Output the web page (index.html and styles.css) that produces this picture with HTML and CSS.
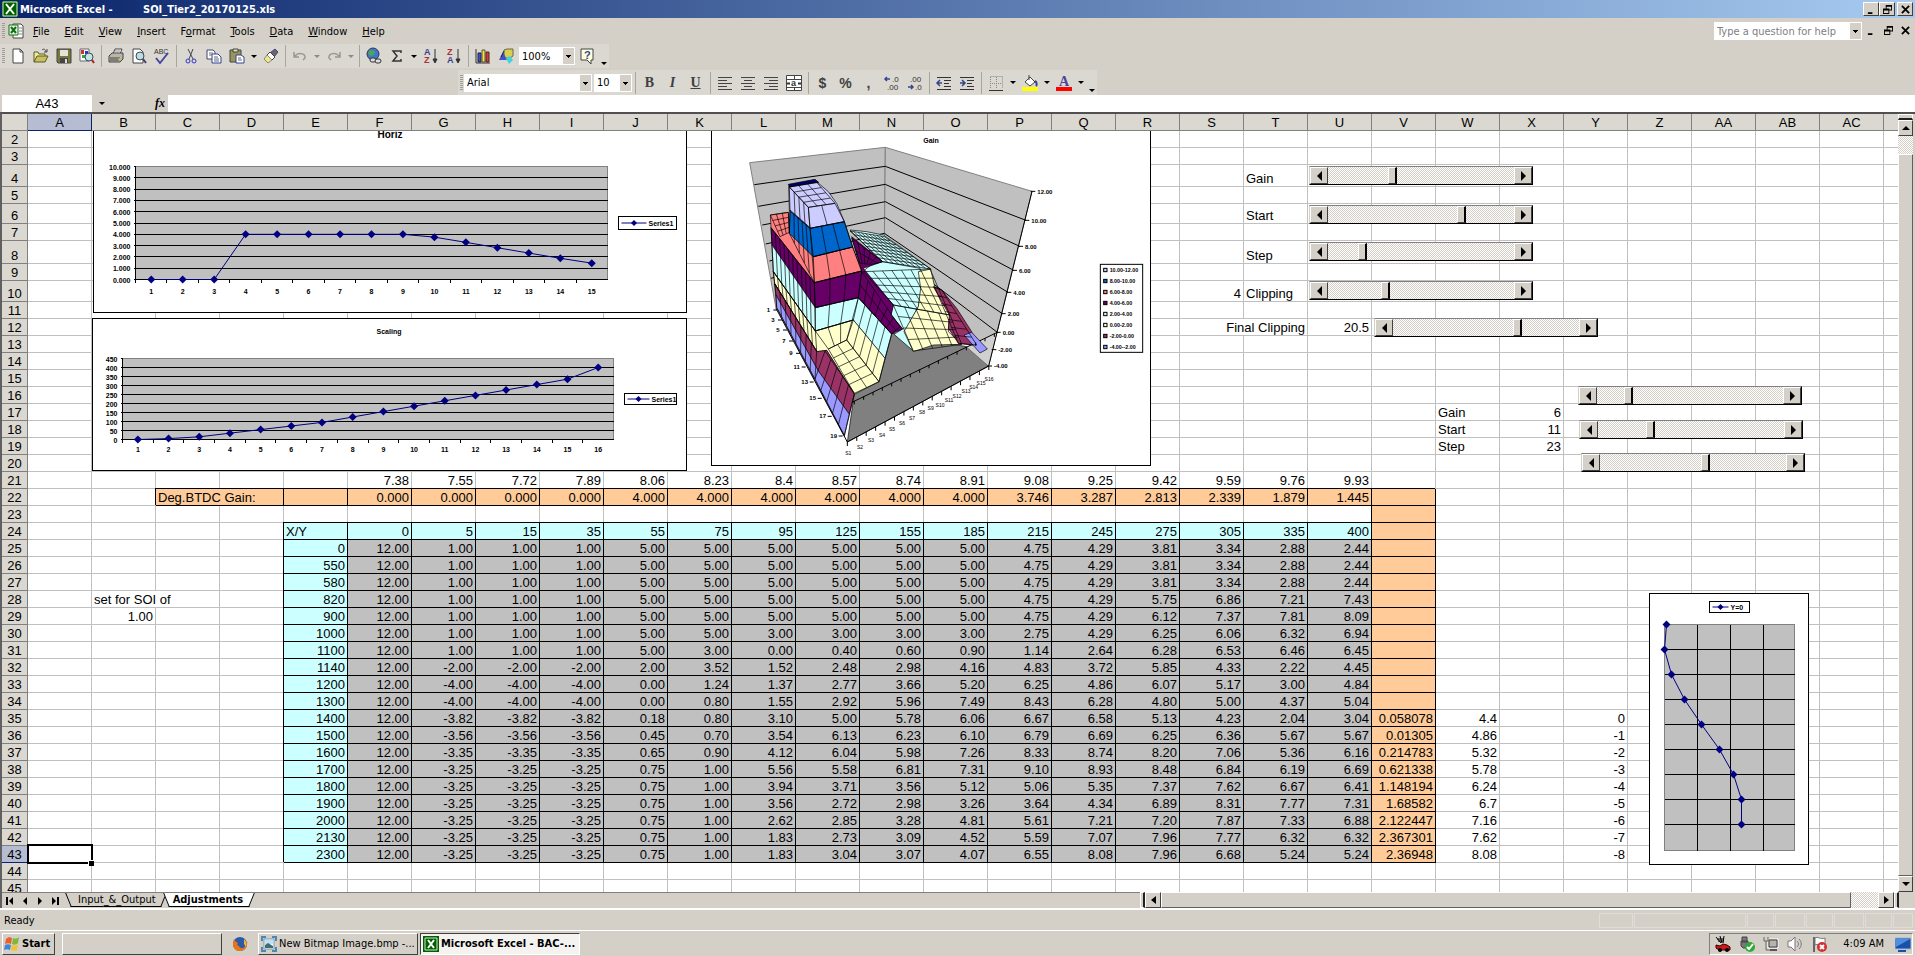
FILE: index.html
```html
<!DOCTYPE html>
<html lang="en">

<head>
    <meta charset="UTF-8">
    <meta name="viewport" content="width=device-width, initial-scale=1.0">
    <title>Microsoft Excel - SOI_Tier2_20170125.xls</title>
    <link rel="stylesheet" href="styles.css">
</head>

<body>

    <header class="titlebar">
        <svg class="icon" viewBox="0 0 16 16"><rect width="16" height="16" fill="#006000"/><path d="M1 1h14v14H1z" fill="none" stroke="#cfe8cf"/><path d="M4 3l8 10M12 3L4 13" stroke="#fff" stroke-width="2"/></svg>
        <span class="app">Microsoft Excel -</span>
        <span class="doc">SOI_Tier2_20170125.xls</span>
        <div class="win-buttons">
            <button aria-label="Minimize"><svg viewBox="0 0 10 10"><path d="M1 8h5v2H1z"/></svg></button>
            <button aria-label="Restore"><svg viewBox="0 0 10 10"><path d="M3 0h7v6H7v4H0V4h3zM4 2v2h3v1h2V2zM1 6v3h5V6z" fill-rule="evenodd"/></svg></button>
            <button aria-label="Close" class="close"><svg viewBox="0 0 10 10"><path d="M1 1l8 8M9 1L1 9" stroke="#000" stroke-width="2"/></svg></button>
        </div>
    </header>

    <nav class="menubar">
        <span class="grip"></span>
        <svg class="icon" viewBox="0 0 16 16"><path d="M5 1h8l2 2v12H5z" fill="#fff" stroke="#444"/><path d="M1 2h9v10H1z" fill="#e8f5e8" stroke="#107010"/><path d="M3 4l5 6M8 4l-5 6" stroke="#107010" stroke-width="2"/><path d="M11 5h3M11 8h3M11 11h3" stroke="#888"/></svg>
        <button><u>F</u>ile</button>
        <button><u>E</u>dit</button>
        <button><u>V</u>iew</button>
        <button><u>I</u>nsert</button>
        <button>F<u>o</u>rmat</button>
        <button><u>T</u>ools</button>
        <button><u>D</u>ata</button>
        <button><u>W</u>indow</button>
        <button><u>H</u>elp</button>
        <div class="ask combo">
            <input type="text" placeholder="Type a question for help" aria-label="Type a question for help">
        </div>
        <div class="doc-buttons">
            <button aria-label="Minimize window"><svg viewBox="0 0 10 10"><path d="M1 8h5v2H1z"/></svg></button>
            <button aria-label="Restore window"><svg viewBox="0 0 10 10"><path d="M3 0h7v6H7v4H0V4h3zM4 2v2h3v1h2V2zM1 6v3h5V6z" fill-rule="evenodd"/></svg></button>
            <button aria-label="Close window"><svg viewBox="0 0 10 10"><path d="M1 1l8 8M9 1L1 9" stroke="#000" stroke-width="2"/></svg></button>
        </div>
    </nav>

    <div class="toolbar standard">
        <span class="grip"></span>
        <button aria-label="New"><svg viewBox="0 0 16 16"><path d="M3 1h7l3 3v11H3z" fill="#fff" stroke="#444"/><path d="M10 1v3h3" fill="none" stroke="#444"/></svg></button>
        <button aria-label="Open"><svg viewBox="0 0 16 16"><path d="M1 14V4h4l1 2h6v2" fill="#f5e9a0" stroke="#5a5a20"/><path d="M1 14l3-6h11l-3 6z" fill="#c9c060" stroke="#5a5a20"/><path d="M9 2c2-2 4 0 4 2M11 4h3V1" fill="none" stroke="#444"/></svg></button>
        <button aria-label="Save"><svg viewBox="0 0 16 16"><path d="M1 1h14v14H2l-1-1z" fill="#77773c" stroke="#444"/><path d="M4 2h8v6H4z" fill="#e4e2da"/><path d="M4 10h8v5H4z" fill="#444"/><path d="M9 11h2v4H9z" fill="#ddd"/></svg></button>
        <button aria-label="Search"><svg viewBox="0 0 16 16"><path d="M1 1h9v12H1z" fill="#fff" stroke="#667"/><path d="M2 2h3v4H2z" fill="#c33"/><path d="M6 3h3v3H6z" fill="#33c"/><path d="M3 7h3v3H3z" fill="#3a3"/><circle cx="10" cy="9" r="4" fill="#bfe6e6" stroke="#445"/><path d="M13 12l2 3" stroke="#a22" stroke-width="2"/></svg></button>
        <span class="sep"></span>
        <button aria-label="Print"><svg viewBox="0 0 16 16"><path d="M5 6l2-5h7l-2 5" fill="#fff" stroke="#444"/><path d="M1 8l3-3h11v6l-3 3H1z" fill="#b8b6a8" stroke="#444"/><path d="M2 10h10M2 12h9" stroke="#444"/><path d="M7 3h5M6 5h5" stroke="#888"/><path d="M10 11h2" stroke="#dd0"/></svg></button>
        <button aria-label="Print Preview"><svg viewBox="0 0 16 16"><path d="M2 1h7l3 3v11H2z" fill="#fff" stroke="#444"/><circle cx="9" cy="8" r="4" fill="#b9e0e0" stroke="#445"/><path d="M12 11l3 4" stroke="#446" stroke-width="2"/></svg></button>
        <button aria-label="Spelling"><svg viewBox="0 0 16 16"><text x="0" y="6" font-size="7" fill="#333">ABC</text><path d="M2 10l4 5 8-10" fill="none" stroke="#4646a0" stroke-width="2"/></svg></button>
        <span class="sep"></span>
        <button aria-label="Cut"><svg viewBox="0 0 16 16"><path d="M5 1l5 10M10 1L6 11" stroke="#445" fill="none"/><circle cx="5" cy="13" r="2" fill="none" stroke="#33c"/><circle cx="11" cy="13" r="2" fill="none" stroke="#33c"/></svg></button>
        <button aria-label="Copy"><svg viewBox="0 0 16 16"><path d="M1 2h6l2 2v7H1z" fill="#fff" stroke="#446"/><path d="M6 6h6l3 3v6H6z" fill="#fff" stroke="#33458c"/><path d="M3 5h4M3 7h3M8 9h4M8 11h5M8 13h5" stroke="#668"/></svg></button>
        <button aria-label="Paste"><svg viewBox="0 0 16 16"><path d="M1 2h11v12H1z" fill="#98945a" stroke="#444"/><path d="M4 1h5v3H4z" fill="#ddb" stroke="#444"/><path d="M7 7h5l3 2v6H7z" fill="#fff" stroke="#33458c"/><path d="M9 10h3M9 12h4" stroke="#668"/></svg></button>
        <button class="drop" aria-label="Paste options"></button>
        <button aria-label="Format Painter"><svg viewBox="0 0 16 16"><path d="M12 1l3 3-4 5-4-4z" fill="#667" stroke="#446"/><path d="M7 4l5 5-3 3-5-5z" fill="#fff" stroke="#444"/><path d="M4 7l5 5-4 3-4-4z" fill="#f0e68c" stroke="#887"/></svg></button>
        <span class="sep"></span>
        <button aria-label="Undo"><svg viewBox="0 0 16 16"><path d="M2 4v5h5M3 8c3-4 11-3 10 2l-2 2" fill="none" stroke="#9a978f" stroke-width="1.5"/></svg></button>
        <button class="drop off" aria-label="Undo list"></button>
        <button aria-label="Redo"><svg viewBox="0 0 16 16"><path d="M14 4v5H9M13 8C10 4 2 5 3 10l2 2" fill="none" stroke="#9a978f" stroke-width="1.5"/></svg></button>
        <button class="drop off" aria-label="Redo list"></button>
        <span class="sep"></span>
        <button aria-label="Insert Hyperlink"><svg viewBox="0 0 16 16"><circle cx="7" cy="6" r="6" fill="#3c78c8" stroke="#335"/><path d="M4 2l5 1-1 4-4 1-2-3z" fill="#4fa35a"/><rect x="4" y="10" width="6" height="4" rx="2" fill="#ddd" stroke="#333"/><rect x="9" y="11" width="6" height="4" rx="2" fill="#ddd" stroke="#333"/></svg></button>
        <button aria-label="AutoSum"><svg viewBox="0 0 16 16"><path d="M12 5V3H4l4 5-4 5h8v-2" fill="none" stroke="#333" stroke-width="1.5"/></svg></button>
        <button class="drop" aria-label="AutoSum options"></button>
        <button aria-label="Sort Ascending"><svg viewBox="0 0 16 16"><text x="1" y="7" font-size="9" font-weight="bold" fill="#33458c">A</text><text x="1" y="15" font-size="9" font-weight="bold" fill="#a33">Z</text><path d="M12 1v13M10 11l2 4 2-4z" stroke="#333" fill="#333"/></svg></button>
        <button aria-label="Sort Descending"><svg viewBox="0 0 16 16"><text x="1" y="7" font-size="9" font-weight="bold" fill="#a33">Z</text><text x="1" y="15" font-size="9" font-weight="bold" fill="#33458c">A</text><path d="M12 1v13M10 11l2 4 2-4z" stroke="#333" fill="#333"/></svg></button>
        <span class="sep"></span>
        <button aria-label="Chart Wizard"><svg viewBox="0 0 16 16"><path d="M1 1v14h14" fill="none" stroke="#333"/><path d="M3 5h3v9H3z" fill="#3c50c8" stroke="#223"/><path d="M7 2h3v12H7z" fill="#f5e050" stroke="#553"/><path d="M11 4h3v10h-3z" fill="#d23c3c" stroke="#522"/></svg></button>
        <button aria-label="Drawing"><svg viewBox="0 0 16 16"><path d="M6 2l3-1h6v7l-3 2H6z" fill="#d8cf4a" stroke="#665"/><path d="M1 12L5 4l4 8z" fill="#3f52c8"/><path d="M3 9l3-6" stroke="#223"/><path d="M8 10l4-2 3 4-4 4z" fill="#3fd2e0"/></svg></button>
        <div class="combo zoom">
            <select aria-label="Zoom"><option>100%</option></select>
        </div>
        <button aria-label="Help"><svg viewBox="0 0 16 16"><path d="M2 1h12v11h-2v4l-4-4H2z" fill="#ffffe0" stroke="#444"/><text x="5" y="11" font-size="11" font-weight="bold" fill="#33458c">?</text></svg></button>
        <button class="drop more" aria-label="Toolbar options"></button>
    </div>

    <div class="toolbar formatting">
        <span class="grip"></span>
        <div class="combo font">
            <select aria-label="Font"><option>Arial</option></select>
        </div>
        <div class="combo size">
            <select aria-label="Font Size"><option>10</option></select>
        </div>
        <span class="sep"></span>
        <button class="letter"><b>B</b></button>
        <button class="letter"><b><i>I</i></b></button>
        <button class="letter"><b><u>U</u></b></button>
        <span class="sep"></span>
        <button aria-label="Align Left"><svg viewBox="0 0 16 16"><path d="M1 2.5h14M1 5.5h9M1 8.5h14M1 11.5h9M1 14.5h14" stroke="#444"/></svg></button>
        <button aria-label="Center"><svg viewBox="0 0 16 16"><path d="M1 2.5h14M4 5.5h8M1 8.5h14M4 11.5h8M1 14.5h14" stroke="#444"/></svg></button>
        <button aria-label="Align Right"><svg viewBox="0 0 16 16"><path d="M1 2.5h14M6 5.5h9M1 8.5h14M6 11.5h9M1 14.5h14" stroke="#444"/></svg></button>
        <button aria-label="Merge and Center"><svg viewBox="0 0 16 16"><path d="M.5 .5h15v15H.5zM1 4.5h14M1 12.5h14M8.5 1v3M8.5 13v2" fill="#fff" stroke="#444"/><text x="5" y="11" font-size="9" font-weight="bold" fill="#333">a</text><path d="M1 8.5h3M12 8.5h3" stroke="#333" stroke-width="2"/></svg></button>
        <span class="sep"></span>
        <button class="letter sign">$</button>
        <button class="letter sign">%</button>
        <button class="letter sign">,</button>
        <button aria-label="Increase Decimal"><svg viewBox="0 0 16 16"><path d="M1 4h5M3 2L1 4l2 2" fill="none" stroke="#33458c" stroke-width="1.5"/><text x="8" y="7" font-size="8" fill="#333">.0</text><text x="3" y="15" font-size="8" fill="#333">.00</text></svg></button>
        <button aria-label="Decrease Decimal"><svg viewBox="0 0 16 16"><text x="3" y="7" font-size="8" fill="#333">.00</text><path d="M1 12h5M4 10l2 2-2 2" fill="none" stroke="#33458c" stroke-width="1.5"/><text x="8" y="15" font-size="8" fill="#333">.0</text></svg></button>
        <span class="sep"></span>
        <button aria-label="Decrease Indent"><svg viewBox="0 0 16 16"><path d="M1 2.5h14M8 5.5h7M8 8.5h5M8 11.5h7M1 14.5h14" stroke="#333"/><path d="M1 8h5M4 5L1 8l3 3" fill="none" stroke="#33458c" stroke-width="1.5"/></svg></button>
        <button aria-label="Increase Indent"><svg viewBox="0 0 16 16"><path d="M1 2.5h14M8 5.5h7M8 8.5h5M8 11.5h7M1 14.5h14" stroke="#333"/><path d="M1 8h5M3 5l3 3-3 3" fill="none" stroke="#33458c" stroke-width="1.5"/></svg></button>
        <span class="sep"></span>
        <button aria-label="Borders"><svg viewBox="0 0 16 16"><path d="M2.5 1.5h12v12M2.5 2v12M8.5 2v12M2 8.5h12" fill="none" stroke="#888" stroke-dasharray="1 1"/><path d="M1 15.5h14" stroke="#333"/></svg></button>
        <button class="drop" aria-label="Border options"></button>
        <button aria-label="Fill Color"><svg viewBox="0 0 16 16"><path d="M3 7l5-5 5 5-5 4z" fill="#fff" stroke="#444"/><path d="M13 6c2 1 2 4 1 5" stroke="#33458c" stroke-width="2" fill="none"/><path d="M7 0v5" stroke="#444"/><path d="M0 12h16v4H0z" fill="#ff0"/></svg></button>
        <button class="drop" aria-label="Fill colours"></button>
        <button aria-label="Font Color"><svg viewBox="0 0 16 16"><text x="3" y="11" font-size="14" font-weight="bold" font-family="Liberation Serif, serif" fill="#46469c">A</text><path d="M0 12h16v4H0z" fill="#f00"/></svg></button>
        <button class="drop" aria-label="Font colours"></button>
        <button class="drop more" aria-label="Toolbar options"></button>
    </div>

    <div class="formula-bar">
        <input class="name-box" type="text" value="A43" aria-label="Name box">
        <button class="drop" aria-label="Names"></button>
        <label class="fx" for="formula"><i>fx</i></label>
        <input id="formula" class="formula" type="text">
    </div>

    <main class="workbook">
        <div class="sheet-row">
            <div class="sheet">
                <table id="cells" class="cells"></table>

                <svg id="horiz" class="chart chart-horiz" viewBox="0 0 592 181"></svg>
                <svg id="scaling" class="chart chart-scaling" viewBox="0 0 593 151"></svg>

                <svg id="surface" class="chart chart-surface" viewBox="36 18 1314 1002">
                    <g stroke="#808080" stroke-width="3" fill="#c0c0c0">
                        <path d="M149 113L556 67 553 365 228 550z"/>
                        <path d="M556 67L996 199 866 723 553 365z"/>
                    </g>
                    <path class="axis" d="M163 179L556 124 978 286M175 244L556 178 959 364M187 300L556 230 941 436M197 357L556 278 924 502M208 408L553 325 907 566M213 460L553 365 892 622"/>
                    <path d="M442 951L866 723 800 665 575 625 463 805z" fill="#808080" stroke="#000" stroke-width="2"/>
                    <path d="M800 665L892 622 866 723z" fill="#d0d0d0"/>
                    <path d="M435 842L892 622" class="axis"/>
                    <!-- colour bands, far side first -->
                    <g stroke="#000" stroke-width="2">
                        <path fill="#cff" d="M450 315L500 320 550 330 600 365 692 432 655 445 548 412z"/>
                        <path fill="#cff" d="M488 440L515 418 548 410 660 430 665 490 655 545 620 610 640 678 582 628 608 612 573 570 580 540z"/>
                        <path fill="#ffc" d="M655 440L692 432 705 490 750 560 745 620 785 658 700 660 640 680 612 620 655 545 662 490z"/>
                        <path fill="#936" d="M700 485L725 495 770 550 815 620 830 662 775 655 745 610 748 570z"/>
                        <path fill="#99f" d="M792 630L815 622 862 672 840 684z"/>
                        <path fill="#606" d="M455 335L548 410 490 430 580 540 573 570 608 612 575 627 475 518 346 548 216 360 213 308 343 473 485 438z"/>
                        <path fill="#ff8080" d="M211 270L265 262 268 322 340 395 458 366 485 438 343 473 213 308z"/>
                        <path fill="#06c" d="M270 255L330 308 433 290 458 366 340 395 268 325z"/>
                        <path fill="#ccf" d="M266 185L350 170 385 200 410 235 433 290 330 310 268 257z"/>
                        <path fill="#006" d="M265 178L345 163 356 172 268 186z"/>
                        <path fill="#cff" d="M216 360L346 548 475 518 575 627 555 700 460 585 346 618 220 440z"/>
                        <path fill="#ffc" d="M220 440L346 618 460 585 555 700 537 770 463 808 380 676 350 680 224 476z"/>
                        <path fill="#936" d="M224 476L350 680 380 676 463 808 448 868 355 738 228 510z"/>
                        <path fill="#99f" d="M228 510L355 738 448 868 433 932 230 548z"/>
                    </g>
                    <path id="mesh" fill="none" stroke="#000" stroke-width="2"/>
                    <path class="axis" d="M996 199L866 723 442 951 228 550"/>
                    <text x="693" y="53" class="chart-name">Gain</text>
                </svg>

                <svg id="offset" class="chart chart-offset" viewBox="0 0 158 270"></svg>

                <div class="scroller gain"><button aria-label="Less gain"></button><input type="range" value="34" aria-label="Gain"><button aria-label="More gain"></button></div>
                <div class="scroller start"><button aria-label="Lower start"></button><input type="range" value="73" aria-label="Start"><button aria-label="Higher start"></button></div>
                <div class="scroller step"><button aria-label="Smaller step"></button><input type="range" value="17" aria-label="Step"><button aria-label="Larger step"></button></div>
                <div class="scroller clip"><button aria-label="Less clipping"></button><input type="range" value="30" aria-label="Clipping"><button aria-label="More clipping"></button></div>
                <div class="scroller final"><button aria-label="Less final clipping"></button><input type="range" value="68" aria-label="Final Clipping"><button aria-label="More final clipping"></button></div>
                <div class="scroller gain2"><button aria-label="Less gain"></button><input type="range" value="15" aria-label="Second gain"><button aria-label="More gain"></button></div>
                <div class="scroller start2"><button aria-label="Lower start"></button><input type="range" value="27" aria-label="Second start"><button aria-label="Higher start"></button></div>
                <div class="scroller step2"><button aria-label="Smaller step"></button><input type="range" value="57" aria-label="Second step"><button aria-label="Larger step"></button></div>
            </div>

            <div class="vscroll">
                <span class="split"></span>
                <button class="up" aria-label="Scroll up"></button>
                <span class="gap"></span>
                <span class="thumb"></span>
                <button class="down" aria-label="Scroll down"></button>
            </div>
        </div>

        <div class="tabs-row">
            <div class="tabs">
                <button class="first" aria-label="First sheet"><svg viewBox="0 0 10 10"><path d="M1 1h2v8H1zM8 1v8L4 5z"/></svg></button>
                <button aria-label="Previous sheet"><svg viewBox="0 0 10 10"><path d="M7 1v8L3 5z"/></svg></button>
                <button aria-label="Next sheet"><svg viewBox="0 0 10 10"><path d="M3 1v8l4-4z"/></svg></button>
                <button aria-label="Last sheet"><svg viewBox="0 0 10 10"><path d="M7 1h2v8H7zM2 1v8l4-4z"/></svg></button>
                <a class="tab" href="#input">Input_&amp;_Output</a>
                <a class="tab current" href="#adjustments">Adjustments</a>
            </div>
            <div class="hscroll">
                <span class="split"></span>
                <button class="left" aria-label="Scroll left"></button>
                <span class="thumb"></span>
                <span class="gap"></span>
                <button class="right" aria-label="Scroll right"></button>
                <span class="split"></span>
            </div>
            <span class="corner"></span>
        </div>
    </main>

    <div class="status">
        <span class="ready">Ready</span>
        <span class="pane w35"></span><span class="pane w112"></span><span class="pane w25"></span><span class="pane w30"></span><span class="pane w25"></span><span class="pane w30"></span><span class="pane w25"></span><span class="pane w20"></span>
    </div>

    <footer class="taskbar">
        <button class="start-button">
            <svg class="icon" viewBox="0 0 16 16"><path d="M2 3c2-2 4-2 6-1L7 8C5 7 3 7 1 8z" fill="#e8602c"/><path d="M9 2c2 1 4 1 6-1l-1 6c-2 2-4 2-6 1z" fill="#7db83a"/><path d="M1 9c2-1 4-1 6 0l-1 5c-2-1-4-1-6 0z" fill="#3f87d6"/><path d="M8 9c2 1 4 1 6-1l-1 6c-2 1-4 1-6 0z" fill="#f2c230"/></svg>
            Start
        </button>
        <button class="task" aria-label="Quick launch"></button>
        <button class="launch" aria-label="Firefox"><svg class="icon" viewBox="0 0 16 16"><circle cx="8" cy="8" r="7" fill="#2d5aa8"/><path d="M2 3C-1 10 3 16 9 15c5-1 7-6 6-10 0 3-2 3-2 5-1 3-5 3-6 0-2 0-2-2-1-3C4 6 3 5 2 3z" fill="#e8741c"/><path d="M12 3c2 2 3 4 2 8l-2-3z" fill="#f5b52e"/></svg></button>
        <button class="task">
            <svg class="icon" viewBox="0 0 16 16"><path d="M1 5V1h4M11 1h4v4M15 11v4h-4M5 15H1v-4" fill="none" stroke="#4a86b8" stroke-width="2"/><path d="M3 3h10v10H3z" fill="#fff" stroke="#79a"/><path d="M4 4h8v4H4z" fill="#bfe0f5"/><path d="M4 9l3-2 5 3v2H4z" fill="#3c6e78"/></svg>
            New Bitmap Image.bmp -...
        </button>
        <button class="task active">
            <svg class="icon" viewBox="0 0 16 16"><rect width="16" height="16" fill="#006000"/><path d="M2 2h12v12H2z" fill="none" stroke="#cfe8cf"/><path d="M5 4l6 8M11 4l-6 8" stroke="#fff" stroke-width="2"/></svg>
            Microsoft Excel - BAC-...
        </button>
        <div class="tray">
            <svg class="icon" viewBox="0 0 16 16"><path d="M1 9l4 1 3-2 4 1 3 2v3H4l-3-2z" fill="#d01818" stroke="#300"/><circle cx="5" cy="14" r="2"/><circle cx="12" cy="14" r="2"/><path d="M1 1l5 6M5 0l2 7M9 0L8 7M2 3h7M3 5h6" stroke="#000"/></svg>
            <svg class="icon" viewBox="0 0 16 16"><path d="M3 1h5v5H3zM2 5h7v5l-2 2H4l-2-2z" fill="#777" stroke="#444"/><circle cx="11" cy="11" r="5" fill="#2fa83a"/><path d="M8 11l2 2 4-5" fill="none" stroke="#fff" stroke-width="2"/></svg>
            <svg class="icon" viewBox="0 0 16 16"><path d="M5 3h10v9H5z" fill="#999" stroke="#fff"/><path d="M6 4h8v7H6z" fill="#b5b3ac" stroke="#444"/><path d="M7 14h7" stroke="#555" stroke-width="2"/><path d="M1 1v4h4V1M3 5v9h4" fill="none" stroke="#666"/></svg>
            <svg class="icon" viewBox="0 0 16 16"><path d="M1 5h3l4-4v14l-4-4H1z" fill="#fff" stroke="#777"/><path d="M10 5c2 2 2 4 0 6M12 3c3 3 3 7 0 10" fill="none" stroke="#777"/></svg>
            <svg class="icon" viewBox="0 0 16 16"><path d="M3 1v15" stroke="#666" stroke-width="2"/><path d="M4 2c3-2 5 2 10 0v7c-5 2-7-2-10 0z" fill="#fff" stroke="#777"/><circle cx="11" cy="11" r="5" fill="#d23030"/><path d="M9 9l4 4M13 9l-4 4" stroke="#fff" stroke-width="2"/></svg>
            <time>4:09 AM</time>
            <svg class="icon" viewBox="0 0 16 16"><path d="M0 2h16v11H0z" fill="#1c4fa8" stroke="#9bd"/><path d="M1 3h14L1 11z" fill="#4f8fe0"/><path d="M3 14h8v2H3z" fill="#1c4fa8"/></svg>
        </div>
    </footer>

    <script src="script.js"></script>
</body>

</html>
```

FILE: styles.css
```css
* {
    box-sizing: border-box;
}

body {
    display: flex;
    flex-direction: column;
    height: 100vh;
    margin: 0;
    overflow: hidden;
    background-color: #d4d0c8;
    color: #000;
    font-family: "DejaVu Sans Condensed", Tahoma, "Noto Sans", sans-serif;
    font-size: 11px;
}

button,
input,
select {
    margin: 0;
    padding: 0;
    border: 0;
    border-radius: 0;
    outline: 0;
    background: none;
    color: #000;
    font: inherit;
}

.icon {
    flex: none;
    width: 16px;
    height: 16px;
}

.grip {
    flex: none;
    width: 3px;
    height: 16px;
    margin: 0 1px 0 2px;
    background: repeating-linear-gradient(#a09d96 0 1px, transparent 1px 2px);
}

/* title bar */

.titlebar {
    display: flex;
    flex: none;
    align-items: center;
    height: 18px;
    padding: 0 2px;
    background: linear-gradient(to right, #0a246a, #a6caf0);
    color: #fff;
    font-weight: bold;
}

.app {
    width: 125px;
    padding-left: 2px;
}

.doc {
    flex: 1;
}

.win-buttons {
    display: flex;
}

.win-buttons button {
    display: flex;
    align-items: center;
    justify-content: center;
    width: 16px;
    height: 14px;
    background-color: #d4d0c8;
    border: 1px solid;
    border-color: #fff #404040 #404040 #fff;
}

.win-buttons .close {
    margin-left: 2px;
}

.win-buttons svg,
.doc-buttons svg {
    width: 9px;
    height: 9px;
}

/* menu */

.menubar {
    display: flex;
    flex: none;
    align-items: center;
    height: 26px;
}

.menubar > button {
    padding: 0 8px 0 7px;
}

.menubar > .icon {
    margin: 0 2px;
}

.combo {
    position: relative;
    height: 18px;
    background-color: #fff;
}

.combo::after {
    content: "";
    position: absolute;
    top: 1px;
    right: 1px;
    width: 11px;
    height: 16px;
    background: linear-gradient(#000, #000) 3px 7px / 5px 1px no-repeat,
        linear-gradient(#000, #000) 4px 8px / 3px 1px no-repeat,
        linear-gradient(#000, #000) 5px 9px / 1px 1px no-repeat,
        #d4d0c8;
    pointer-events: none;
}

.combo select,
.combo input {
    display: block;
    width: 100%;
    height: 18px;
    padding: 0 3px;
    appearance: none;
}

.ask {
    width: 148px;
    margin-left: auto;
}

.ask input::placeholder {
    color: #808080;
}

.doc-buttons {
    display: flex;
    gap: 1px;
    padding: 0 2px 0 1px;
}

.doc-buttons button {
    width: 16px;
    height: 16px;
}

/* toolbars */

.toolbar {
    display: flex;
    flex: none;
    align-items: center;
    align-self: flex-start;
    height: 24px;
    background-color: #dbd8d1;
}

.formatting {
    height: 25px;
    margin: 2px 0 0 458px;
}

.toolbar button {
    display: flex;
    align-items: center;
    justify-content: center;
    width: 23px;
    height: 22px;
}

.toolbar svg {
    width: 16px;
    height: 16px;
    overflow: visible;
    font-family: "Liberation Sans", sans-serif;
}

.toolbar .drop,
.drop {
    width: 11px;
}

.drop::after {
    content: "";
    flex: none;
    border: 3px solid transparent;
    border-top-color: #000;
    border-bottom-width: 0;
}

.drop.off::after {
    border-top-color: #8c8a82;
}

.toolbar .more {
    align-items: flex-end;
    padding-bottom: 2px;
}

.sep {
    width: 1px;
    height: 22px;
    margin: 0 2px 0 3px;
    background-color: #a6a69c;
}

.zoom {
    width: 56px;
    margin: 0 0 0 2px;
}

.font {
    width: 128px;
}

.size {
    width: 38px;
    margin-left: 2px;
}

.letter {
    color: #404040;
    font-family: "Liberation Serif", serif;
    font-size: 14px;
}

.toolbar .sign {
    font-family: "Liberation Sans", sans-serif;
    font-weight: bold;
}

/* formula bar */

.formula-bar {
    display: flex;
    flex: none;
    height: 17px;
    padding-left: 2px;
}

.name-box {
    width: 90px;
    background-color: #fff;
    font-family: "Liberation Sans", sans-serif;
    font-size: 13px;
    text-align: center;
}

.formula-bar .drop {
    display: flex;
    align-items: center;
    justify-content: center;
    width: 20px;
}

.fx {
    width: 56px;
    padding-right: 3px;
    font: bold 12px/16px "Liberation Serif", serif;
    text-align: right;
}

.formula {
    flex: 1;
    background-color: #fff;
}

/* sheet */

.workbook {
    display: flex;
    flex: 1;
    flex-direction: column;
    min-height: 0;
    border-top: 2px solid #505050;
    border-left: 2px solid #606060;
}

.sheet-row {
    display: flex;
    flex: 1;
    min-height: 0;
}

.sheet {
    position: relative;
    flex: 1;
    min-width: 0;
    overflow: hidden;
    background-color: #fff;
    font-family: "Liberation Sans", Arial, sans-serif;
    font-size: 13px;
}

.cells {
    width: 1946px;
    table-layout: fixed;
    border-collapse: separate;
    border-spacing: 0;
    line-height: 15px;
}

.cells th,
.cells td {
    padding: 1px 2px 0;
    border: 0 solid #c0c0c0;
    border-width: 0 1px 1px 0;
    text-align: right;
    vertical-align: bottom;
    white-space: nowrap;
}

.cells th {
    padding: 1px 0 0;
    background-color: #dbd8d1;
    border-color: #808080;
    font-weight: normal;
    text-align: center;
}

.cells th:first-child {
    width: 26px;
}

.cells th.selected {
    background-color: #b6bdd2;
    border-color: #0a246a;
}

.cells td.text {
    text-align: left;
}

.cells td.orange,
.cells td.cyan,
.cells td.grey {
    border-color: #000;
    box-shadow: -1px -1px 0 #000;
}

.cells td.orange {
    background-color: #fc9;
}

.cells td.cyan {
    background-color: #cff;
}

.cells td.grey {
    background-color: #c0c0c0;
}

.cells td.cursor {
    position: relative;
}

.cursor::before {
    content: "";
    position: absolute;
    inset: -2px -2px -2px -1px;
    border: 2px solid #000;
}

.cursor::after {
    content: "";
    position: absolute;
    right: -3px;
    bottom: -4px;
    width: 5px;
    height: 5px;
    background-color: #000;
    border: 0 solid #fff;
    border-width: 1px 0 0 1px;
}

/* charts lie over the cells */

.chart {
    position: absolute;
    background-color: #fff;
    border: 1px solid #000;
    font-family: "Liberation Sans", Arial, sans-serif;
    font-size: 7px;
    font-weight: bold;
}

.chart-horiz {
    left: 91px;
    top: 17px;
    width: 594px;
    height: 182px;
    border-top: 0;
}

.chart-scaling {
    left: 90px;
    top: 204px;
    width: 595px;
    height: 153px;
}

.chart-surface {
    left: 709px;
    top: 17px;
    width: 440px;
    height: 335px;
    border-top: 0;
    font-size: 21px;
}

.chart-offset {
    left: 1647px;
    top: 479px;
    width: 160px;
    height: 272px;
}

.axis {
    fill: none;
    stroke: #000;
    stroke-width: 3;
}

.line-axis {
    fill: none;
    stroke: #000;
    shape-rendering: crispEdges;
}

.series {
    fill: none;
    stroke: #000080;
}

.marker {
    fill: #000080;
}

.plot {
    fill: #c0c0c0;
    stroke: #808080;
}

.legend {
    fill: #fff;
    stroke: #000;
}

.chart-name {
    text-anchor: middle;
}

.value {
    text-anchor: end;
}

.large {
    font-size: 10px;
}

/* scroll bar controls */

.scroller {
    position: absolute;
    display: flex;
    width: 224px;
    height: 19px;
    border: 1px solid;
    border-color: #808080 #000 #000 #d4d0c8;
}

.scroller button,
.vscroll button,
.hscroll button {
    display: flex;
    flex: none;
    align-items: center;
    justify-content: center;
    width: 18px;
    background-color: #d4d0c8;
    border: 1px solid;
    border-color: #fff #404040 #404040 #fff;
}

.scroller button::after,
.vscroll button::after,
.hscroll button::after {
    content: "";
    border: 4px solid transparent;
}

.scroller button::after {
    border-width: 5px;
}

.scroller button:first-child::after,
.hscroll .left::after {
    border-right: 5px solid #000;
    border-left-width: 0;
}

.scroller button:last-child::after,
.hscroll .right::after {
    border-left: 5px solid #000;
    border-right-width: 0;
}

.vscroll .up::after {
    border-bottom: 4px solid #000;
    border-top-width: 0;
}

.vscroll .down::after {
    border-top: 4px solid #000;
    border-bottom-width: 0;
}

.scroller input {
    flex: 1;
    min-width: 0;
    height: 17px;
    appearance: none;
    background: repeating-conic-gradient(#fff 0 25%, #d4d0c8 0 50%) 0 0 / 2px 2px;
}

.scroller input::-webkit-slider-thumb {
    width: 9px;
    height: 17px;
    appearance: none;
    background-color: #d4d0c8;
    border: 1px solid;
    border-color: #fff #000 #404040 #fff;
    border-right-width: 2px;
}

.gain { left: 1307px; top: 52px; }
.start { left: 1307px; top: 91px; }
.step { left: 1307px; top: 128px; }
.clip { left: 1307px; top: 167px; }
.final { left: 1372px; top: 204px; }
.gain2 { left: 1576px; top: 272px; }
.start2 { left: 1577px; top: 306px; }
.step2 { left: 1579px; top: 339px; }

.vscroll {
    display: flex;
    flex: none;
    flex-direction: column;
    width: 17px;
    padding-right: 2px;
}

.vscroll .split {
    height: 6px;
    border: 1px solid #fff;
    border-bottom: 2px solid #202020;
}

.vscroll button {
    width: 15px;
    height: 16px;
}

.vscroll .gap {
    height: 18px;
}

.gap {
    background: repeating-conic-gradient(#fff 0 25%, #d4d0c8 0 50%) 0 0 / 2px 2px;
}

.vscroll .thumb {
    flex: 1;
}

.thumb {
    background-color: #d4d0c8;
    border: 1px solid;
    border-color: #fff #606060 #606060 #fff;
}

/* sheet tabs */

.tabs-row {
    display: flex;
    flex: none;
    height: 16px;
}

.tabs {
    position: relative;
    z-index: 0;
    display: flex;
    flex: 3;
    border-top: 1px solid #808080;
}

.tabs button {
    width: 15px;
}

.tabs svg {
    display: block;
    width: 10px;
    height: 10px;
    margin: auto;
}

.tab {
    position: relative;
    height: 14px;
    margin-left: 4px;
    padding: 0 11px 0 12px;
    color: #000;
    line-height: 13px;
    text-decoration: none;
}

/* the two halves lean towards each other */
.tab::before,
.tab::after {
    content: "";
    position: absolute;
    top: 0;
    bottom: 0;
    z-index: -1;
    background-color: #d4d0c8;
    border: solid #000;
    border-width: 0 0 1px 1px;
}

.tab::before {
    left: 2px;
    right: 40%;
    transform: skewX(22deg);
}

.tab::after {
    left: 40%;
    right: 2px;
    border-width: 0 1px 1px 0;
    transform: skewX(-22deg);
}

.tab.current {
    margin-left: -3px;
    padding: 0 11px 0 9px;
    font-weight: bold;
}

.tab.current::before,
.tab.current::after {
    background-color: #fff;
}

.hscroll {
    display: flex;
    flex: 2;
}

.hscroll .split {
    width: 5px;
    border: 1px solid #fff;
    border-right: 2px solid #202020;
}

.hscroll button {
    width: 16px;
}

.hscroll .thumb {
    flex: 1;
}

.hscroll .gap {
    width: 27px;
}

.corner {
    width: 16px;
}

/* status bar */

.status {
    display: flex;
    flex: none;
    align-items: center;
    gap: 1px;
    height: 22px;
    padding: 1px 2px 0 4px;
    border-top: 2px solid #fff;
}

.ready {
    flex: 1;
}

.pane {
    height: 15px;
    border: 1px solid #e0ddd6;
}

.w20 { width: 20px; }
.w25 { width: 27px; }
.w30 { width: 30px; }
.w35 { width: 34px; }
.w112 { width: 112px; }

/* taskbar */

.taskbar {
    display: flex;
    flex: none;
    align-items: center;
    height: 26px;
    padding: 0 2px;
    border-top: 1px solid #fff;
}

.start-button,
.task {
    display: flex;
    align-items: center;
    gap: 2px;
    height: 22px;
    padding: 0 2px;
    border: 1px solid;
    border-color: #fff #404040 #404040 #fff;
    white-space: nowrap;
}

.start-button {
    width: 53px;
    padding: 0 1px;
    font-weight: bold;
}

.task {
    width: 160px;
    margin-left: 7px;
}

.launch {
    width: 16px;
    height: 16px;
    margin: 0 3px 0 10px;
}

.task.active {
    margin-left: 2px;
    background-color: #f4f3f0;
    border-color: #404040 #fff #fff #404040;
    font-weight: bold;
}

.tray {
    display: flex;
    align-items: center;
    gap: 8px;
    height: 22px;
    margin-left: auto;
    padding: 0 1px 0 5px;
    border: 1px solid;
    border-color: #808080 #fff #fff #808080;
}

.tray time {
    padding: 0 3px 0 8px;
}
```

FILE: script.js
```javascript
const svgNS = "http://www.w3.org/2000/svg"

const columns = []
for (let i = 0; i < 30; i++) {
    columns.push(i < 26 ? String.fromCharCode(65 + i) : "A" + String.fromCharCode(65 + i - 26))
}

// rows that are not 17px high
const heights = { 4: 22, 6: 20, 8: 23, 10: 21 }

const factors = ["7.38", "7.55", "7.72", "7.89", "8.06", "8.23", "8.4", "8.57", "8.74", "8.91", "9.08", "9.25", "9.42", "9.59", "9.76", "9.93"]
const gains = ["0.000", "0.000", "0.000", "0.000", "4.000", "4.000", "4.000", "4.000", "4.000", "4.000", "3.746", "3.287", "2.813", "2.339", "1.879", "1.445"]
const axisX = [0, 5, 15, 35, 55, 75, 95, 125, 155, 185, 215, 245, 275, 305, 335, 400]

const map = `
0 12.00 1.00 1.00 1.00 5.00 5.00 5.00 5.00 5.00 5.00 4.75 4.29 3.81 3.34 2.88 2.44
550 12.00 1.00 1.00 1.00 5.00 5.00 5.00 5.00 5.00 5.00 4.75 4.29 3.81 3.34 2.88 2.44
580 12.00 1.00 1.00 1.00 5.00 5.00 5.00 5.00 5.00 5.00 4.75 4.29 3.81 3.34 2.88 2.44
820 12.00 1.00 1.00 1.00 5.00 5.00 5.00 5.00 5.00 5.00 4.75 4.29 5.75 6.86 7.21 7.43
900 12.00 1.00 1.00 1.00 5.00 5.00 5.00 5.00 5.00 5.00 4.75 4.29 6.12 7.37 7.81 8.09
1000 12.00 1.00 1.00 1.00 5.00 5.00 3.00 3.00 3.00 3.00 2.75 4.29 6.25 6.06 6.32 6.94
1100 12.00 1.00 1.00 1.00 5.00 3.00 0.00 0.40 0.60 0.90 1.14 2.64 6.28 6.53 6.46 6.45
1140 12.00 -2.00 -2.00 -2.00 2.00 3.52 1.52 2.48 2.98 4.16 4.83 3.72 5.85 4.33 2.22 4.45
1200 12.00 -4.00 -4.00 -4.00 0.00 1.24 1.37 2.77 3.66 5.20 6.25 4.86 6.07 5.17 3.00 4.84
1300 12.00 -4.00 -4.00 -4.00 0.00 0.80 1.55 2.92 5.96 7.49 8.43 6.28 4.80 5.00 4.37 5.04
1400 12.00 -3.82 -3.82 -3.82 0.18 0.80 3.10 5.00 5.78 6.06 6.67 6.58 5.13 4.23 2.04 3.04 0.058078
1500 12.00 -3.56 -3.56 -3.56 0.45 0.70 3.54 6.13 6.23 6.10 6.79 6.69 6.25 6.36 5.67 5.67 0.01305
1600 12.00 -3.35 -3.35 -3.35 0.65 0.90 4.12 6.04 5.98 7.26 8.33 8.74 8.20 7.06 5.36 6.16 0.214783
1700 12.00 -3.25 -3.25 -3.25 0.75 1.00 5.56 5.58 6.81 7.31 9.10 8.93 8.48 6.84 6.19 6.69 0.621338
1800 12.00 -3.25 -3.25 -3.25 0.75 1.00 3.94 3.71 3.56 5.12 5.06 5.35 7.37 7.62 6.67 6.41 1.148194
1900 12.00 -3.25 -3.25 -3.25 0.75 1.00 3.56 2.72 2.98 3.26 3.64 4.34 6.89 8.31 7.77 7.31 1.68582
2000 12.00 -3.25 -3.25 -3.25 0.75 1.00 2.62 2.85 3.28 4.81 5.61 7.21 7.20 7.87 7.33 6.88 2.122447
2130 12.00 -3.25 -3.25 -3.25 0.75 1.00 1.83 2.73 3.09 4.52 5.59 7.07 7.96 7.77 6.32 6.32 2.367301
2300 12.00 -3.25 -3.25 -3.25 0.75 1.00 1.83 3.04 3.07 4.07 6.55 8.08 7.96 6.68 5.24 5.24 2.36948
`.trim().split("\n").map(line => line.split(" "))

const steps = ["4.4", "4.86", "5.32", "5.78", "6.24", "6.7", "7.16", "7.62", "8.08"]

const cells = {
    T4: ["Gain", "text"],
    T6: ["Start", "text"],
    T8: ["Step", "text"],
    S10: ["4"],
    T10: ["Clipping", "text"],
    S12: ["Final Clipping", "", 2],
    U12: ["20.5"],
    W17: ["Gain", "text"],
    X17: ["6"],
    W18: ["Start", "text"],
    X18: ["11"],
    W19: ["Step", "text"],
    X19: ["23"],
    C22: ["Deg.BTDC Gain:", "text orange", 2],
    E22: ["", "orange"],
    E24: ["X/Y", "text cyan"],
    B28: ["set for SOI of", "text", 2],
    B29: ["1.00"],
    A43: ["", "cursor"],
}

for (let i = 0; i < 16; i++) {
    cells[columns[5 + i] + 21] = [factors[i]]
    cells[columns[5 + i] + 22] = [gains[i], "orange"]
    cells[columns[5 + i] + 24] = [axisX[i], "cyan"]
}
for (let row = 22; row <= 43; row++) {
    cells["V" + row] = ["", "orange"]
}
map.forEach((line, r) => {
    line.forEach((value, c) => {
        const style = c === 0 ? "cyan" : c === 17 ? "orange" : "grey"
        cells[columns[4 + c] + (25 + r)] = [value, style]
    })
})
steps.forEach((value, i) => {
    cells["W" + (35 + i)] = [value]
    cells["Y" + (35 + i)] = [i === 0 ? 0 : -i]
})

function renderSheet() {
    let html = "<tr><th></th>"
    columns.forEach(name => {
        html += `<th${name === "A" ? ' class="selected"' : ""}>${name}</th>`
    })
    html += "</tr>"

    for (let row = 2; row <= 45; row++) {
        html += `<tr style="height: ${heights[row] || 17}px"><th${row === 43 ? ' class="selected"' : ""}>${row}</th>`
        for (let c = 0; c < columns.length; c++) {
            const [value, style, span] = cells[columns[c] + row] || ["", ""]
            html += `<td class="${style || ""}" colspan="${span || 1}">${value}</td>`
            if (span) c += span - 1
        }
        html += "</tr>"
    }
    document.querySelector("#cells").innerHTML = html
}

function draw(target, tag, attrs, text) {
    const el = document.createElementNS(svgNS, tag)
    for (const name in attrs) el.setAttribute(name, attrs[name])
    if (text !== undefined) el.textContent = text
    target.appendChild(el)
}

function drawSeries(svg, points, size) {
    draw(svg, "polyline", { points: points.join(" "), class: "series" })
    points.forEach(([x, y]) => {
        draw(svg, "path", { d: `M${x} ${y - size}l${size} ${size}l${-size} ${size}l${-size} ${-size}z`, class: "marker" })
    })
}

function drawLegend(svg, x, y, w, h, name) {
    const middle = y + h / 2
    draw(svg, "rect", { x: x, y: y, width: w, height: h, class: "legend" })
    draw(svg, "path", { d: `M${x + 3} ${middle}H${x + w / 2 - 1}`, class: "series" })
    drawSeries(svg, [[x + w / 4 + 1, middle]], 3)
    draw(svg, "text", { x: x + w / 2 + 1, y: middle + 3 }, name)
}

function lineChart(id, o) {
    const svg = document.querySelector(id)
    draw(svg, "text", { x: 296, y: o.titleY, class: "chart-name " + o.titleClass }, o.title)
    draw(svg, "rect", { x: o.x, y: o.y, width: o.w, height: o.h, class: "plot" })
    for (let i = 0; i <= o.ticks; i++) {
        const y = o.y + o.h - o.h * i / o.ticks
        draw(svg, "path", { d: `M${o.x - 2} ${y}h${i === o.ticks ? 2 : o.w + 2}`, class: "line-axis" })
        draw(svg, "text", { x: o.x - 5, y: y + 3, class: "value" }, o.label(i))
    }
    const slot = o.w / o.data.length
    o.data.forEach((v, i) => {
        draw(svg, "path", { d: `M${o.x + slot * i} ${o.y + o.h}v3`, class: "line-axis" })
        draw(svg, "text", { x: o.x + slot * (i + 0.5), y: o.y + o.h + o.gap, class: "chart-name" }, i + 1)
    })
    draw(svg, "path", { d: `M${o.x} ${o.y}v${o.h}`, class: "line-axis" })
    drawSeries(svg, o.data.map((v, i) => [o.x + slot * (i + 0.5), o.y + o.h - o.h * v / o.max]), 4)
    drawLegend(svg, ...o.legend, "Series1")
}

function offsetChart() {
    const svg = document.querySelector("#offset")
    draw(svg, "rect", { x: 14.5, y: 30.5, width: 130, height: 226, class: "plot" })
    for (let i = 1; i < 9; i++) draw(svg, "path", { d: `M15 ${30.5 + i * 25}h130`, class: "line-axis" })
    for (let i = 1; i < 4; i++) draw(svg, "path", { d: `M${14.5 + i * 33} 31v226`, class: "line-axis" })
    const xs = [16, 14, 21, 34, 51, 69, 83, 91, 91]
    drawSeries(svg, xs.map((x, i) => [x + 0.5, 30.5 + i * 25]), 4)
    drawLegend(svg, 59.5, 7.5, 40, 11, "Y=0")
}

function surfaceChart() {
    const svg = document.querySelector("#surface")

    // each patch: four corners, then the number of columns and rows
    const patches = [
        [[268, 186], [350, 172], [405, 235], [325, 247], 3, 4],
        [[325, 247], [405, 235], [433, 290], [330, 310], 2, 1],
        [[268, 186], [325, 247], [330, 310], [270, 257], 4, 1],
        [[270, 255], [330, 308], [343, 473], [268, 325], 5, 1],
        [[330, 310], [433, 290], [458, 366], [340, 395], 3, 1],
        [[340, 395], [458, 366], [485, 438], [343, 473], 3, 1],
        [[343, 473], [485, 438], [475, 518], [346, 548], 3, 1],
        [[346, 548], [475, 518], [460, 585], [346, 618], 3, 1],
        [[346, 618], [460, 585], [440, 645], [385, 672], 3, 1],
        [[385, 672], [440, 645], [537, 770], [463, 805], 2, 5],
        [[475, 518], [575, 627], [537, 770], [440, 645], 5, 1],
        [[211, 270], [265, 262], [268, 322], [240, 335], 3, 4],
        [[213, 308], [343, 473], [346, 618], [220, 440], 10, 1],
        [[220, 440], [346, 618], [350, 678], [224, 476], 10, 1],
        [[224, 476], [350, 678], [345, 762], [230, 548], 8, 1],
        [[375, 678], [463, 805], [433, 932], [345, 762], 5, 1],
        [[450, 318], [553, 335], [692, 432], [548, 410], 9, 8],
        [[455, 340], [548, 410], [515, 418], [480, 415], 5, 2],
        [[490, 440], [690, 432], [750, 570], [580, 540], 7, 5],
        [[580, 540], [750, 570], [785, 658], [640, 678], 5, 4],
        [[485, 440], [600, 605], [575, 627], [475, 518], 6, 2],
        [[705, 488], [725, 495], [830, 660], [775, 655], 1, 7],
    ]
    const mix = (a, b, t) => [a[0] + (b[0] - a[0]) * t, a[1] + (b[1] - a[1]) * t]
    let d = ""
    patches.forEach(([a, b, c, e, cols, rows]) => {
        for (let i = 0; i <= cols; i++) d += `M${mix(a, b, i / cols)}L${mix(e, c, i / cols)}`
        for (let i = 0; i <= rows; i++) d += `M${mix(a, e, i / rows)}L${mix(b, c, i / rows)}`
    })
    document.querySelector("#mesh").setAttribute("d", d)

    const levels = [[996, 199], [978, 286], [959, 364], [941, 436], [924, 502], [907, 566], [892, 622], [879, 674], [866, 723]]
    levels.forEach(([x, y], i) => {
        draw(svg, "path", { d: `M${x - 4} ${y}h14`, class: "axis" })
        draw(svg, "text", { x: x + 16, y: y + 7, "font-size": 18 }, (12 - 2 * i).toFixed(2))
    })

    const depth = [[205, 555], [219, 585], [234, 615], [252, 648], [273, 685], [290, 726], [314, 771], [338, 820], [368, 874], [401, 933]]
    depth.forEach(([x, y], i) => {
        draw(svg, "path", { d: `M${x + 15} ${y}h12`, class: "axis" })
        draw(svg, "text", { x: x, y: y + 6, class: "chart-name", "font-size": 18 }, 2 * i + 1)
    })

    const front = [[445, 985], [480, 967], [513, 946], [546, 931], [576, 912], [606, 895], [636, 880], [666, 863], [692, 850], [720, 842], [747, 827], [771, 815], [798, 800], [821, 788], [843, 776], [867, 764]]
    front.forEach(([x, y], i) => {
        draw(svg, "path", { d: `M${442 + i * 28.3} ${951 - i * 15.2}v12M${463 + i * 28} ${828 - i * 13.5}v10`, class: "axis" })
        draw(svg, "text", { x: x, y: y + 5, class: "chart-name", "font-size": 15, "font-weight": "normal" }, "S" + (i + 1))
    })

    const bands = [["#ccf", "10.00-12.00"], ["#06c", "8.00-10.00"], ["#ff8080", "6.00-8.00"], ["#606", "4.00-6.00"], ["#cff", "2.00-4.00"], ["#ffc", "0.00-2.00"], ["#936", "-2.00-0.00"], ["#99f", "-4.00--2.00"]]
    draw(svg, "rect", { x: 1201, y: 418, width: 127, height: 264, fill: "#fff", stroke: "#000", "stroke-width": 3 })
    bands.forEach(([color, name], i) => {
        const y = 435 + i * 33
        draw(svg, "rect", { x: 1211, y: y - 5, width: 10, height: 10, fill: color, stroke: "#000", "stroke-width": 3 })
        draw(svg, "text", { x: 1229, y: y + 6, "font-size": 16 }, name)
    })
}

renderSheet()

lineChart("#horiz", {
    title: "Horiz", titleY: 7, titleClass: "large",
    x: 41.5, y: 35.5, w: 472, h: 113, ticks: 10, max: 10, gap: 14,
    label: i => i.toFixed(3),
    data: gains.slice(1).map(Number),
    legend: [524.5, 85.5, 58, 13],
})

lineChart("#scaling", {
    title: "Scaling", titleY: 15, titleClass: "",
    x: 29.5, y: 39.5, w: 491, h: 81, ticks: 9, max: 450, gap: 12,
    label: i => i * 50,
    data: axisX,
    legend: [531.5, 74.5, 52, 11],
})

offsetChart()
surfaceChart()
```
